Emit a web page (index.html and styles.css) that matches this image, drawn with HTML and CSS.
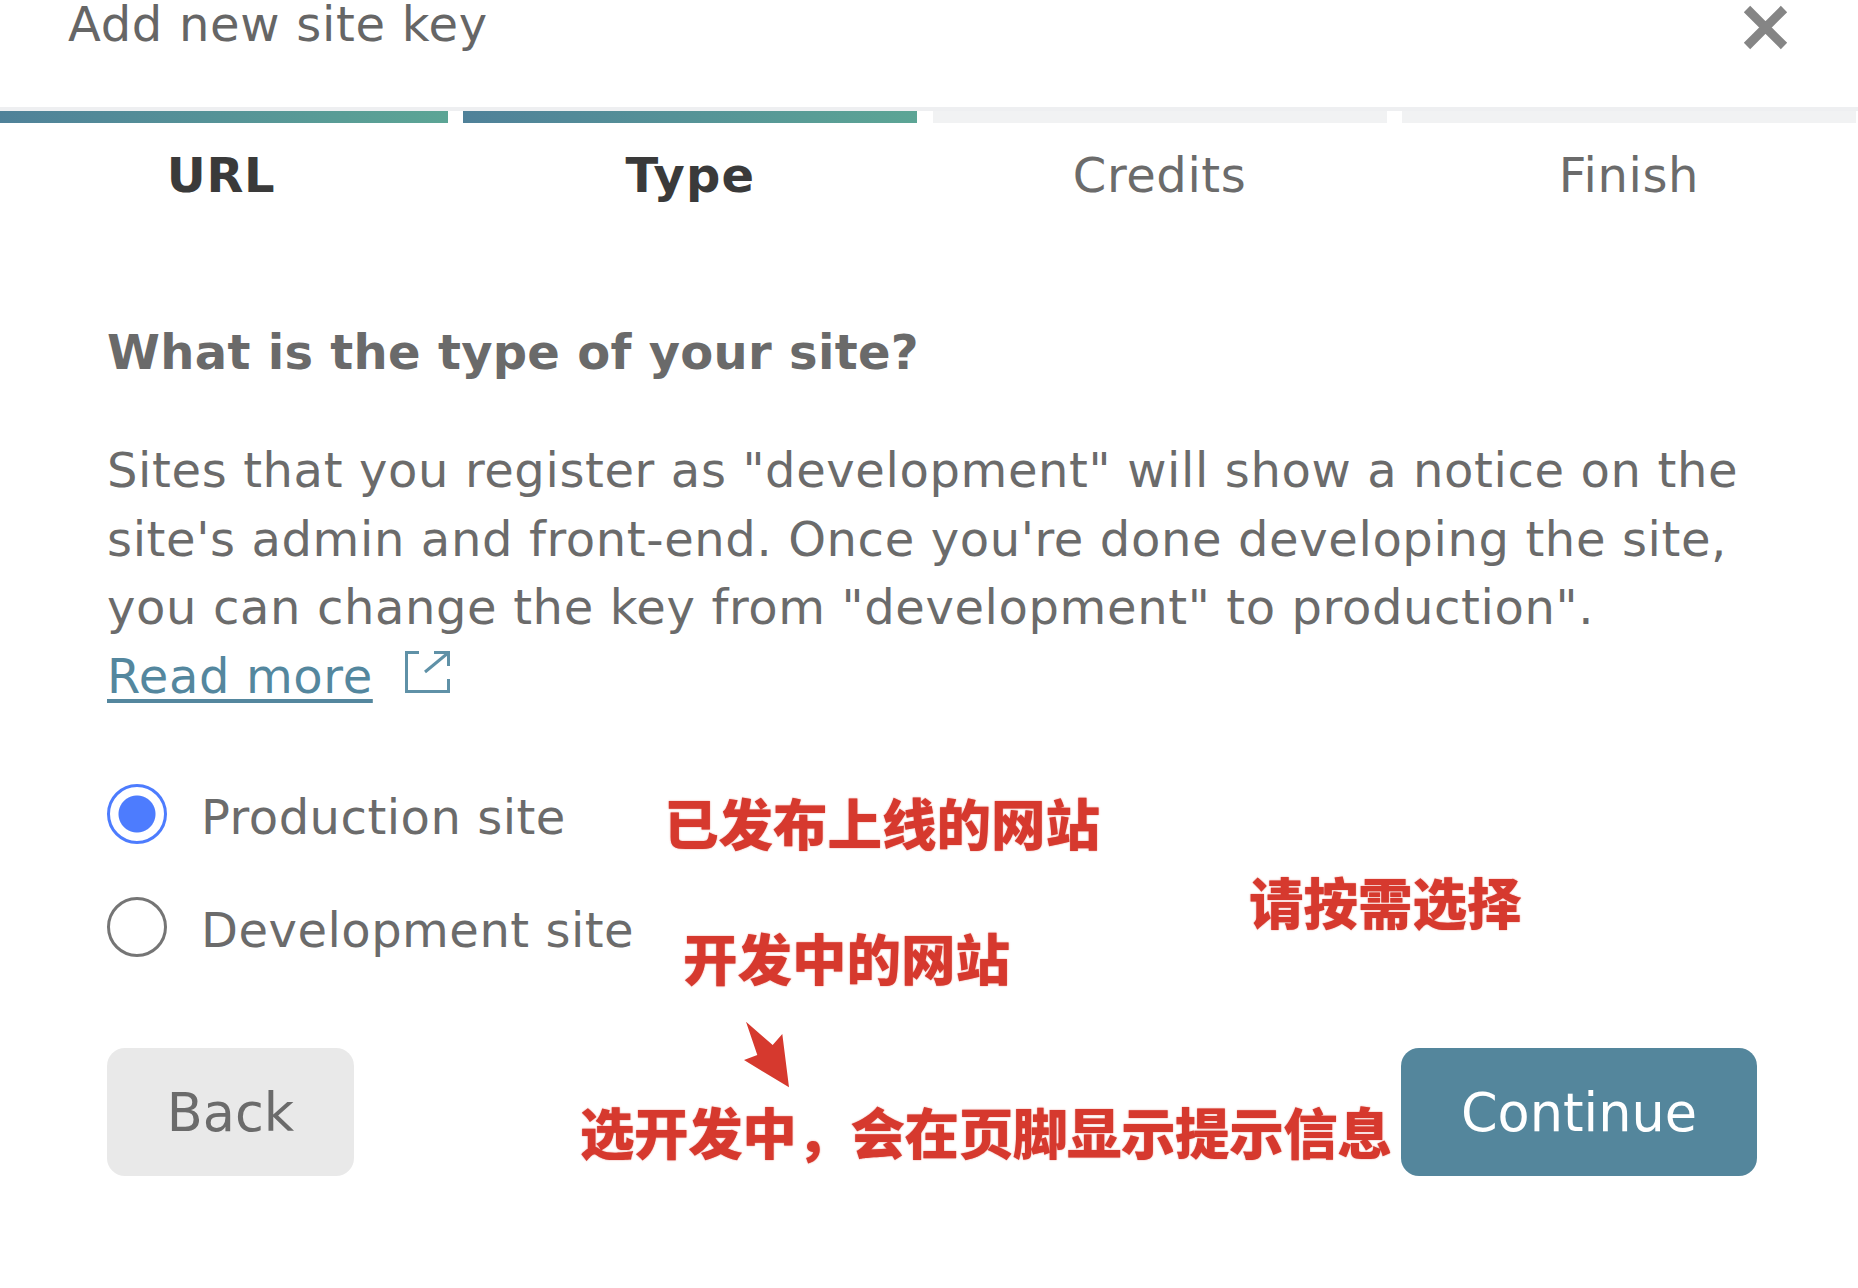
FILE: index.html
```html
<!DOCTYPE html>
<html lang="en">
<head>
<meta charset="utf-8">
<title>Add new site key</title>
<link rel="stylesheet" href="styles.css">
</head>
<body>
<main class="modal">
  <header class="modal-head">
    <h1 class="modal-title">Add new site key</h1>
    <svg class="close" viewBox="0 0 45 45" aria-hidden="true"><path d="M4 4 L41 41 M41 4 L4 41"/></svg>
  </header>
  <ol class="steps">
    <li class="step done"><span class="bar"></span><span class="step-name">URL</span></li>
    <li class="step done"><span class="bar"></span><span class="step-name">Type</span></li>
    <li class="step"><span class="bar"></span><span class="step-name">Credits</span></li>
    <li class="step"><span class="bar"></span><span class="step-name">Finish</span></li>
  </ol>
  <section class="content">
    <h2 class="question">What is the type of your site?</h2>
    <p class="desc">Sites that you register as "development" will show a notice on the<br>site's admin and front-end. Once you're done developing the site,<br>you can change the key from "development" to production".<br><a class="more" href="#">Read more</a><svg class="ext" viewBox="0 0 45 42" aria-hidden="true"><path d="M14 1.5H1.5V40.500H43.500V28M20 21L43 2M29 1.500H43.500V15"/></svg></p>
    <div class="options">
      <label class="option"><span class="radio on"></span><span class="option-text">Production site</span></label>
      <label class="option"><span class="radio"></span><span class="option-text">Development site</span></label>
    </div>
    <div class="actions">
      <button class="btn back">Back</button>
      <button class="btn next">Continue</button>
    </div>
  </section>
  <div class="note n1">已发布上线的网站</div>
  <div class="note n2">请按需选择</div>
  <div class="note n3">开发中的网站</div>
  <svg class="arrow" viewBox="0 0 46 68" aria-hidden="true"><polygon points="2,0.700 28.700,24 38.300,13 45,66.300 0,39 13.300,34"/></svg>
  <div class="note n4">选开发中，会在页脚显示提示信息</div>
</main>
</body>
</html>
```

FILE: styles.css
```css
* { box-sizing: border-box; }
html, body { margin: 0; padding: 0; background: #fff; }
body { width: 1858px; height: 1288px; overflow: hidden; font-family: "DejaVu Sans", sans-serif; color: #6b6b6b; }
.modal { position: relative; width: 1858px; height: 1288px; overflow: hidden; }
.modal-head { height: 111px; border-bottom: 4px solid #eeeff1; padding: 0 70px 0 68px; display: flex; justify-content: space-between; align-items: flex-start; }
.modal-title { margin: 0; font-size: 48px; line-height: 48px; letter-spacing: 0.7px; font-weight: 400; color: #666; }
.close { width: 45px; height: 45px; margin: 5px 0 0; flex: none; }
.close path { stroke: #858585; stroke-width: 9; fill: none; }
.steps { list-style: none; margin: 0 -6px; padding: 0; display: grid; grid-template-columns: repeat(4, 454px); column-gap: 15.3px; }
.step { display: flex; flex-direction: column; align-items: center; }
.bar { display: block; width: 100%; height: 12px; background: #f1f2f3; }
.step.done .bar { background: linear-gradient(90deg, #4f8199, #5ca595); }
.step-name { font-size: 48px; line-height: 60px; letter-spacing: 0.6px; margin-top: 22px; color: #6b6b6b; }
.step.done .step-name { font-weight: 700; color: #3a3a3a; }
.step:nth-child(2) .step-name { letter-spacing: 1.100px; }
.content { padding: 0 101px 0 107px; }
.question { margin: 117px 0 0; font-size: 48px; line-height: 60px; letter-spacing: 0.3px; font-weight: 700; color: #6a6a6a; }
.desc { margin: 54px 0 0; font-size: 48px; line-height: 68.500px; letter-spacing: 0.62px; }
.more { color: #54879e; text-decoration: underline; text-underline-offset: 6px; }
.ext { width: 45px; height: 42px; margin-left: 32px; }
.ext path { stroke: #5f91a7; stroke-width: 3; fill: none; }
.options { margin-top: 74px; display: flex; flex-direction: column; gap: 53px; }
.option { display: flex; align-items: center; gap: 34px; height: 60px; font-size: 48px; line-height: 60px; letter-spacing: 0.5px; }
.option-text { padding-top: 6px; }
.radio { width: 60px; height: 60px; border-radius: 50%; border: 3px solid #757575; flex: none; }
.radio.on { border-color: #4d7cfe; background: radial-gradient(circle, #4d7cfe 0 18px, transparent 19px); }
.actions { margin-top: 91px; display: flex; justify-content: space-between; }
.btn { height: 128px; border: 0; border-radius: 18px; font-family: inherit; font-size: 52.500px; padding: 0; }
.back { width: 247px; background: #e9e9e9; color: #6b6b6b; }
.next { width: 356px; background: #54869c; color: #fff; }
.note { position: absolute; font-family: "Noto Sans CJK SC", sans-serif; font-weight: 900; font-size: 54.500px; line-height: 60px; color: #d6392e; white-space: nowrap; text-shadow: 0 0 1.500px rgba(214, 57, 46, 0.7); }
.n1 { left: 664px; top: 792px; }
.n2 { left: 1249px; top: 871px; }
.n3 { left: 683px; top: 927px; }
.n4 { left: 580px; top: 1101px; letter-spacing: -0.4px; }
.arrow { position: absolute; left: 744px; top: 1021px; width: 46px; height: 68px; }
.arrow polygon { fill: #d6392e; }
```
